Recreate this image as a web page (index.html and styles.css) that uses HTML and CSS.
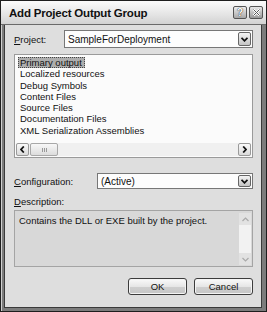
FILE: index.html
```html
<!DOCTYPE html>
<html lang="en">
<head>
  <meta charset="UTF-8" />
  <title>Add Project Output Group</title>
  <link rel="stylesheet" href="styles.css">
</head>
<body>
  <div class="dialog">
    <div class="titlebar">
      <span class="title">Add Project Output Group</span>
      <span class="tb-button">?</span>
      <span class="tb-button close">
        <svg width="9" height="9" viewBox="0 0 9 9"><path d="M1.5 1.5 L7.5 7.5 M7.5 1.5 L1.5 7.5" stroke="#fff" stroke-width="2.4"/><path d="M1.5 1.5 L7.5 7.5 M7.5 1.5 L1.5 7.5" stroke="#555" stroke-width="1"/></svg>
      </span>
    </div>

    <div class="client">
      <div class="row project-row">
        <label class="field-label"><u>P</u>roject:</label>
        <div class="combo">
          <span class="combo-text">SampleForDeployment</span>
          <span class="combo-arrow">
            <svg width="7" height="5" viewBox="0 0 7 5"><path d="M0.5 0.8 L3.5 3.8 L6.5 0.8" fill="none" stroke="#111" stroke-width="1.8"/></svg>
          </span>
        </div>
      </div>

      <div class="listbox">
        <ul class="items">
          <li class="selected">Primary output</li>
          <li>Localized resources</li>
          <li>Debug Symbols</li>
          <li>Content Files</li>
          <li>Source Files</li>
          <li>Documentation Files</li>
          <li>XML Serialization Assemblies</li>
        </ul>
        <div class="hscroll">
          <span class="sb-btn">
            <svg width="5" height="7" viewBox="0 0 5 7"><path d="M3.8 0.5 L1 3.5 L3.8 6.5" fill="none" stroke="#111" stroke-width="1.8"/></svg>
          </span>
          <span class="sb-thumb"><span class="grip"></span></span>
          <span class="sb-track"></span>
          <span class="sb-btn">
            <svg width="5" height="7" viewBox="0 0 5 7"><path d="M1.2 0.5 L4 3.5 L1.2 6.5" fill="none" stroke="#111" stroke-width="1.8"/></svg>
          </span>
        </div>
      </div>

      <div class="row config-row">
        <label class="field-label"><u>C</u>onfiguration:</label>
        <div class="combo short">
          <span class="combo-text">(Active)</span>
          <span class="combo-arrow">
            <svg width="7" height="5" viewBox="0 0 7 5"><path d="M0.5 0.8 L3.5 3.8 L6.5 0.8" fill="none" stroke="#111" stroke-width="1.8"/></svg>
          </span>
        </div>
      </div>

      <label class="desc-label"><u>D</u>escription:</label>
      <div class="description">
        <p class="desc-text">Contains the DLL or EXE built by the project.</p>
        <div class="vscroll">
          <span class="vs-btn">
            <svg width="7" height="5" viewBox="0 0 7 5"><path d="M0.5 4 L3.5 1 L6.5 4" fill="none" stroke="#aaa" stroke-width="1.2"/></svg>
          </span>
          <span class="vs-track"></span>
          <span class="vs-btn">
            <svg width="7" height="5" viewBox="0 0 7 5"><path d="M0.5 1 L3.5 4 L6.5 1" fill="none" stroke="#aaa" stroke-width="1.2"/></svg>
          </span>
        </div>
      </div>

      <div class="buttons">
        <button class="btn">OK</button>
        <button class="btn">Cancel</button>
      </div>
    </div>
  </div>
</body>
</html>
```

FILE: styles.css
```css
html, body {
  margin: 0;
  padding: 0;
  background: #fff;
}
body {
  font-family: "Liberation Sans", Arial, sans-serif;
  font-size: 9.5px;
  color: #111;
  width: 267px;
  height: 312px;
}
.dialog {
  box-sizing: border-box;
  width: 267px;
  height: 312px;
  border: 1px solid #1e1e1e;
  background: #7c7c7c;
  padding: 0 4px 3px 3px;
  display: flex;
  flex-direction: column;
  box-shadow: inset 1px 1px 0 #d0d0d0;
}
.titlebar {
  height: 23px;
  display: flex;
  align-items: center;
  gap: 2px;
  margin: 0 -4px 0 -3px;
  padding: 0 3px 0 8px;
  background: linear-gradient(#fbfbfb, #e4e4e4 60%, #d2d2d2);
  border-bottom: 1px solid #6a6a6a;
}
.title {
  flex: 1;
  font-size: 11.5px;
  font-weight: bold;
  letter-spacing: -0.2px;
  color: #111;
}
.tb-button {
  box-sizing: border-box;
  width: 14px;
  height: 13px;
  border: 1px solid #555;
  border-radius: 2px;
  background: linear-gradient(#eee, #a8a8a8);
  display: flex;
  align-items: center;
  justify-content: center;
  font-size: 10px;
  font-weight: bold;
  color: #fff;
  text-shadow: 0 0 1px #333, 0 0 1px #333;
}
.tb-button.close {
  background: linear-gradient(#e6e6e6, #999);
}
.client {
  flex: 1;
  background: #dedede;
  border-left: 1px solid #3a3a3a;
  border-right: 1px solid #3a3a3a;
  border-bottom: 1px solid #3a3a3a;
  padding: 5px 8px 0 9px;
  display: flex;
  flex-direction: column;
}
.row {
  display: flex;
  align-items: center;
}
.field-label {
  color: #111;
}
.project-row .field-label {
  width: 50px;
}
.config-row {
  margin-top: 15px;
}
.config-row .field-label {
  width: 83px;
}
.combo {
  flex: 1;
  box-sizing: border-box;
  height: 18px;
  border: 1px solid #777;
  background: #fdfdfd;
  display: flex;
  align-items: center;
  padding: 0 1px 0 3px;
}
.combo.short {
  height: 16px;
}
.combo-text {
  flex: 1;
  font-size: 10px;
}
.combo-arrow {
  box-sizing: border-box;
  width: 13px;
  height: calc(100% - 2px);
  border: 1px solid #666;
  border-radius: 2px;
  background: linear-gradient(#f4f4f4, #c4c4c4);
  display: flex;
  align-items: center;
  justify-content: center;
}
.listbox {
  box-sizing: border-box;
  height: 104px;
  margin-top: 6px;
  border: 1px solid #9a9a9a;
  background: #fbfbfb;
  display: flex;
  flex-direction: column;
}
.items {
  flex: 1;
  list-style: none;
  margin: 0;
  padding: 2px 0 0 3px;
}
.items li {
  height: 11.3px;
  line-height: 11.3px;
  padding-left: 2px;
}
.items li.selected {
  display: inline-block;
  padding-right: 3px;
  background: #adadad;
  outline: 1px dotted #444;
  outline-offset: -1px;
}
.hscroll {
  height: 13px;
  margin: 0 1px 1px 1px;
  display: flex;
  gap: 1px;
  background: #f0f0f0;
}
.sb-btn {
  box-sizing: border-box;
  width: 13px;
  border: 1px solid #9a9a9a;
  border-radius: 2px;
  background: linear-gradient(#fafafa, #dadada);
  display: flex;
  align-items: center;
  justify-content: center;
}
.sb-thumb {
  box-sizing: border-box;
  width: 28px;
  border: 1px solid #a8a8a8;
  border-radius: 2px;
  background: linear-gradient(#f8f8f8, #dcdcdc);
  display: flex;
  align-items: center;
  justify-content: center;
}
.grip {
  width: 5px;
  height: 4px;
  background: repeating-linear-gradient(90deg, #999 0 1px, transparent 1px 2px);
}
.sb-track {
  flex: 1;
}
.desc-label {
  margin-top: 7px;
  line-height: 11px;
}
.description {
  box-sizing: border-box;
  height: 57px;
  margin-top: 3px;
  border: 1px solid #a4a4a4;
  background: #d8d8d8;
  display: flex;
}
.desc-text {
  flex: 1;
  margin: 0;
  padding: 4px 4px;
  line-height: 12px;
}
.vscroll {
  width: 12px;
  margin: 2px 1px 1px 0;
  display: flex;
  flex-direction: column;
  background: #e8e8e8;
}
.vs-btn {
  height: 12px;
  display: flex;
  align-items: center;
  justify-content: center;
  background: #e2e2e2;
}
.vs-track {
  flex: 1;
  background: #f2f2f2;
}
.buttons {
  margin-top: 11px;
  display: flex;
  justify-content: flex-end;
  gap: 7px;
}
.btn {
  box-sizing: border-box;
  width: 59px;
  height: 17px;
  padding: 0;
  font-family: "Liberation Sans", Arial, sans-serif;
  font-size: 9.5px;
  color: #111;
  border: 1px solid #3c3c3c;
  border-radius: 3px;
  background: linear-gradient(#fafafa, #e6e6e6 50%, #cfcfcf 51%, #c6c6c6);
  box-shadow: inset 0 0 0 1px #f4f4f4;
}
```
